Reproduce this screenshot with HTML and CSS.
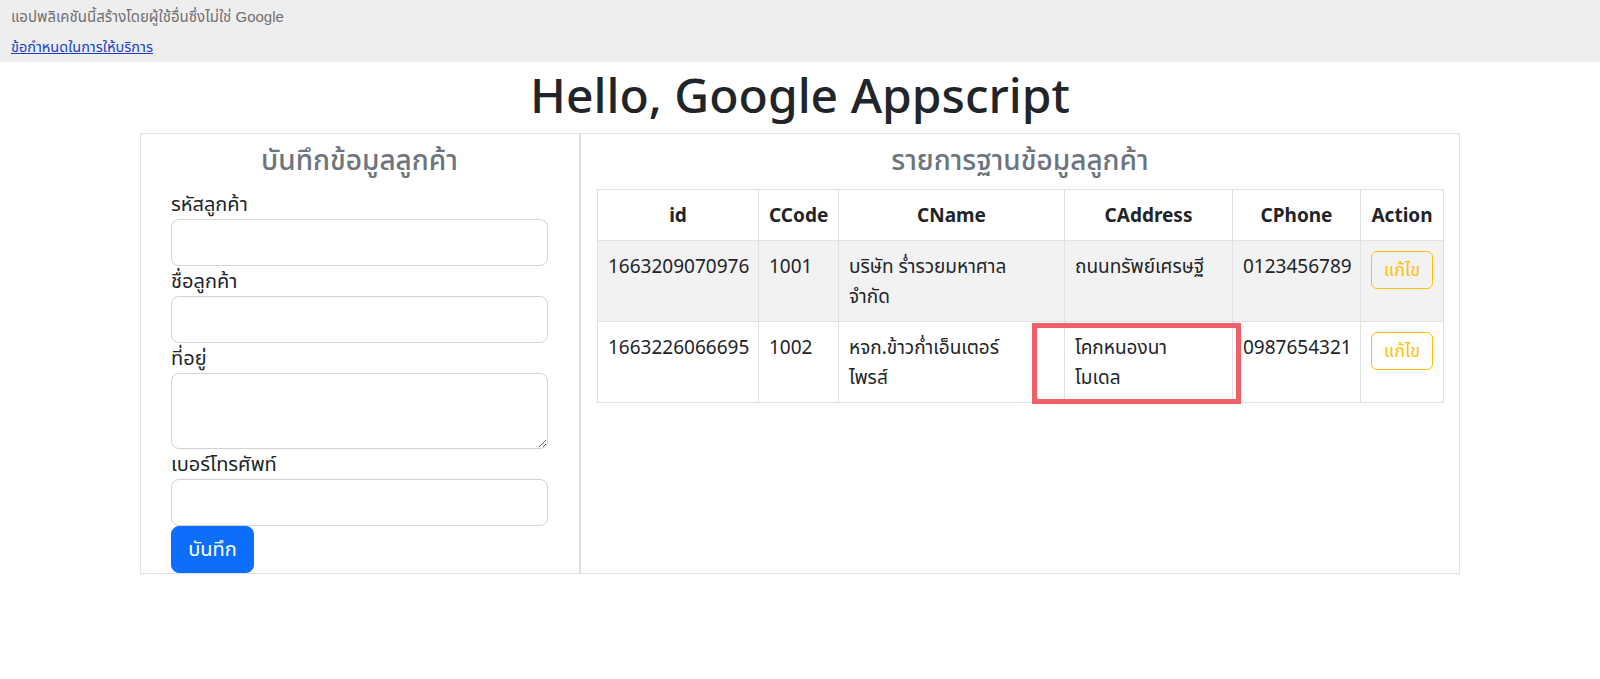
FILE: index.html
```html
<!DOCTYPE html>
<html lang="th">
<head>
<meta charset="utf-8">
<title>Hello, Google Appscript</title>
<link rel="stylesheet" href="styles.css">
</head>
<body>
<div class="gbar">
  <div class="gbar-note">แอปพลิเคชันนี้สร้างโดยผู้ใช้อื่นซึ่งไม่ใช่ Google</div>
  <div class="gbar-links"><a href="#" class="gbar-link">ข้อกำหนดในการให้บริการ</a></div>
</div>

<h1 class="page-title">Hello, Google Appscript</h1>

<div class="container">
  <div class="col-form">
    <h3 class="panel-title">บันทึกข้อมูลลูกค้า</h3>
    <form class="cust-form">
      <label class="field-label">รหัสลูกค้า</label>
      <input class="field-input" type="text">
      <label class="field-label">ชื่อลูกค้า</label>
      <input class="field-input" type="text">
      <label class="field-label">ที่อยู่</label>
      <textarea class="field-input field-area"></textarea>
      <label class="field-label">เบอร์โทรศัพท์</label>
      <input class="field-input" type="text">
      <button type="button" class="btn-save">บันทึก</button>
    </form>
  </div>
  <div class="col-table">
    <h3 class="panel-title">รายการฐานข้อมูลลูกค้า</h3>
    <table class="data-table">
      <colgroup>
        <col class="c-id"><col class="c-code"><col class="c-name"><col class="c-addr"><col class="c-phone"><col class="c-act">
      </colgroup>
      <thead>
        <tr><th>id</th><th>CCode</th><th>CName</th><th>CAddress</th><th>CPhone</th><th>Action</th></tr>
      </thead>
      <tbody>
        <tr class="row-striped">
          <td>1663209070976</td><td>1001</td><td>บริษัท ร่ำรวยมหาศาล<br>จำกัด</td><td>ถนนทรัพย์เศรษฐี</td><td>0123456789</td><td><button type="button" class="btn-edit">แก้ไข</button></td>
        </tr>
        <tr>
          <td>1663226066695</td><td>1002</td><td>หจก.ข้าวก่ำเอ็นเตอร์<br>ไพรส์</td><td>โคกหนองนา<br>โมเดล</td><td>0987654321</td><td><button type="button" class="btn-edit">แก้ไข</button></td>
        </tr>
      </tbody>
    </table>
  </div>
</div>

<div class="highlight-box"></div>
</body>
</html>
```

FILE: styles.css
```css
* { box-sizing: border-box; }

body {
  margin: 0;
  font-family: "Noto Sans", "Noto Sans Thai", "Open Sans", sans-serif;
  color: #212529;
  background: #fff;
  position: relative;
}

.gbar {
  background: #eeeeee;
  height: 62px;
  padding: 0 11px;
  font-family: "Liberation Sans", Arial, "Noto Sans Thai", sans-serif;
}
.gbar-note {
  height: 33px;
  line-height: 33px;
  font-size: 15px;
  color: #707070;
}
.gbar-links {
  line-height: 29px;
  font-size: 14.5px;
}
.gbar-link {
  color: #1a3fc7;
  text-decoration: underline;
}

.page-title {
  margin: 2px 0 7px;
  text-align: center;
  font-size: 48px;
  line-height: 62px;
  font-weight: 500;
  color: #212529;
}

.container {
  width: 1320px;
  margin: 0 auto;
  display: flex;
}

.col-form {
  width: 440px;
  border: 1px solid #dee2e6;
  padding: 0 31px 0 30px;
}
.col-table {
  width: 880px;
  border: 1px solid #dee2e6;
  padding: 0 16px;
}

.panel-title {
  margin: 8px 0 13px;
  text-align: center;
  font-size: 28px;
  line-height: 34px;
  font-weight: 500;
  color: #6c757d;
}

.cust-form {
  display: flex;
  flex-direction: column;
  align-items: flex-start;
}
.field-label {
  display: block;
  font-size: 20px;
  line-height: 30px;
  color: #212529;
}
.field-input {
  display: block;
  width: 100%;
  height: 47px;
  border: 1px solid #ced4da;
  border-radius: 8px;
  background: #fff;
  font-size: 20px;
  padding: 8px 16px;
  font-family: inherit;
}
.field-area {
  height: 76px;
  resize: vertical;
}
.btn-save {
  width: 83px;
  height: 47px;
  border: 1px solid #0d6efd;
  background: #0d6efd;
  color: #fff;
  border-radius: 8px;
  font-size: 20px;
  font-family: inherit;
  padding: 0;
}

.data-table {
  width: 100%;
  table-layout: fixed;
  border-collapse: collapse;
  font-size: 19px;
  line-height: 30px;
  color: #212529;
}
.c-id { width: 161px; }
.c-code { width: 80px; }
.c-name { width: 226px; }
.c-addr { width: 168px; }
.c-phone { width: 128px; }
.c-act { width: 83px; }

.data-table th,
.data-table td {
  border: 1px solid #dee2e6;
  padding: 10px 10px;
  vertical-align: top;
  text-align: left;
  white-space: nowrap;
}
.data-table th {
  text-align: center;
  font-weight: 700;
}
.row-striped td { background: #f2f2f2; }

.btn-edit {
  width: 62px;
  height: 38px;
  border: 1px solid #ffc107;
  border-radius: 6px;
  background: transparent;
  color: #ffc107;
  font-size: 18px;
  font-family: inherit;
  padding: 0;
}

.highlight-box {
  position: absolute;
  left: 1032px;
  top: 323px;
  width: 209px;
  height: 81px;
  border: 5px solid #ef5f67;
  pointer-events: none;
}
```
